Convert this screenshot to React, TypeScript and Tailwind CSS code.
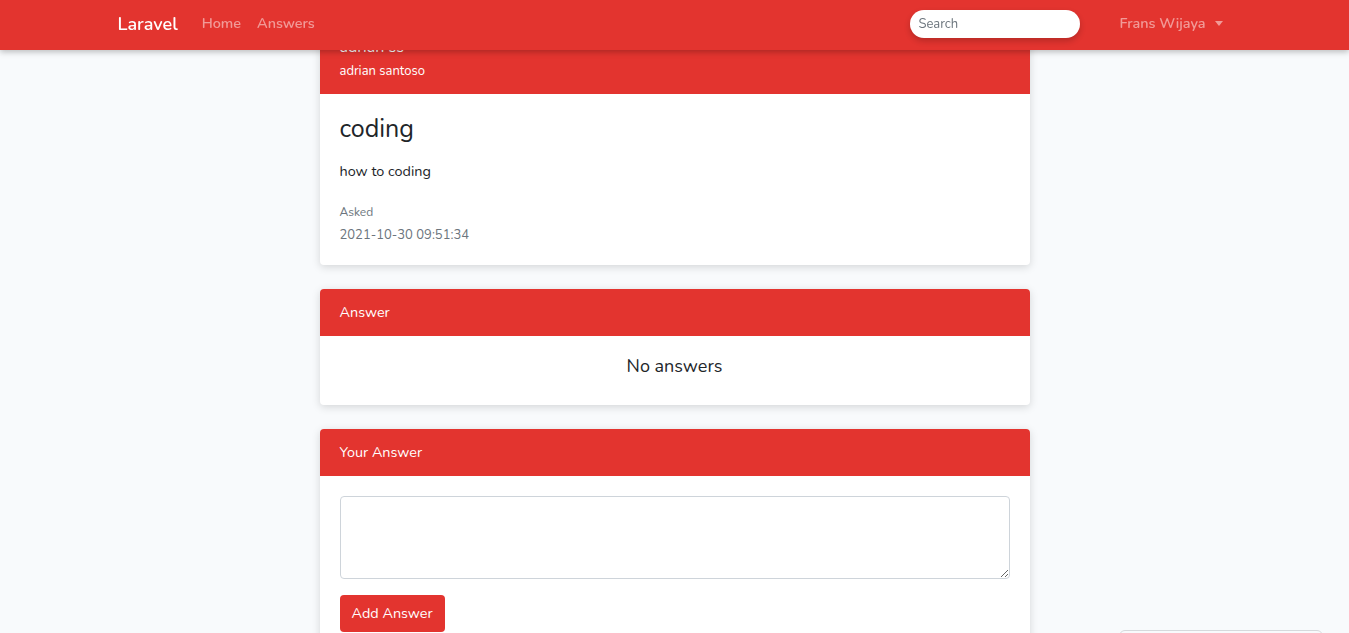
import React from "react";

export default function App() {
  const font = { fontFamily: "Nunito, Lato, 'Noto Sans', sans-serif" };
  return (
    <div className="min-h-[633px] bg-[#f8fafc] text-[#212529] text-[14.4px] leading-[1.6] font-['Lato',sans-serif]" style={font}>
      <nav className="fixed top-0 left-0 right-0 z-20 h-[50px] bg-[#e3342f] shadow-[0_2px_6px_rgba(0,0,0,0.25)]">
        <div className="mx-auto flex h-full w-[1114px] items-center pb-[2px]">
          <span className="text-[18px] font-semibold text-white mr-[16px]">Laravel</span>
          <a className="px-[8px] text-[14.4px] font-semibold text-white/50">Home</a>
          <a className="px-[8px] text-[14.4px] font-semibold text-white/50">Answers</a>
          <div className="flex-1" />
          <input
            placeholder="Search"
            className="h-[28px] w-[170px] rounded-full bg-white px-[8px] text-[13px] text-[#495057] placeholder:text-[#6c757d] shadow-[0_3px_6px_rgba(0,0,0,0.2)] outline-none"
          />
          <div className="ml-[31px] mr-[1px] flex items-center px-[8px] text-[14.4px] font-semibold text-white/50">
            Frans Wijaya
            <span className="ml-[9px] inline-block h-0 w-0 border-l-[4px] border-r-[4px] border-t-[5px] border-l-transparent border-r-transparent border-t-white/50" />
          </div>
        </div>
      </nav>

      <main className="mx-auto flex w-[710px] flex-col gap-[24px] pt-[24px] pb-[40px]">
        <div className="overflow-hidden rounded-[4px] bg-white shadow-[0_2px_8px_rgba(0,0,0,0.15)]">
          <div className="bg-[#e3342f] px-[20px] py-[12px] text-white">
            <div className="text-[16px] leading-[22px]">adrian ss</div>
            <div className="mt-[3px] text-[13px] leading-[21px]">adrian santoso</div>
          </div>
          <div className="px-[20px] pt-[20px] pb-[19px]">
            <h3 className="text-[25px] leading-[30px] font-normal">coding</h3>
            <p className="mt-[16px] text-[14.4px] leading-[23px]">how to coding</p>
            <div className="mt-[20px] text-[12px] leading-[19px] text-[#6c757d]">Asked</div>
            <div className="mt-[3px] text-[13px] leading-[21px] text-[#6c757d]">2021-10-30 09:51:34</div>
          </div>
        </div>

        <div className="overflow-hidden rounded-[4px] bg-white shadow-[0_2px_8px_rgba(0,0,0,0.15)]">
          <div className="bg-[#e3342f] px-[20px] py-[12px] text-[14.4px] leading-[23px] text-white">Answer</div>
          <div className="px-[20px] pt-[16px] pb-[24px] text-center text-[18px] leading-[29px]">No answers</div>
        </div>

        <div className="overflow-hidden rounded-[4px] bg-white shadow-[0_2px_8px_rgba(0,0,0,0.15)]">
          <div className="bg-[#e3342f] px-[20px] py-[12px] text-[14.4px] leading-[23px] text-white">Your Answer</div>
          <div className="p-[20px]">
            <textarea className="block h-[83px] w-full rounded-[4px] border border-[#ced4da] bg-white px-[12px] py-[6px] outline-none" />
            <button className="mt-[16px] h-[37px] rounded-[4px] bg-[#e3342f] px-[12px] text-[14.4px] text-white">
              Add Answer
            </button>
          </div>
        </div>
      </main>

      <div className="fixed left-[1119px] top-[630px] h-[40px] w-[204px] rounded-[6px] border border-[#d6d9dc] bg-[#f8fafc]" />
    </div>
  );
}
